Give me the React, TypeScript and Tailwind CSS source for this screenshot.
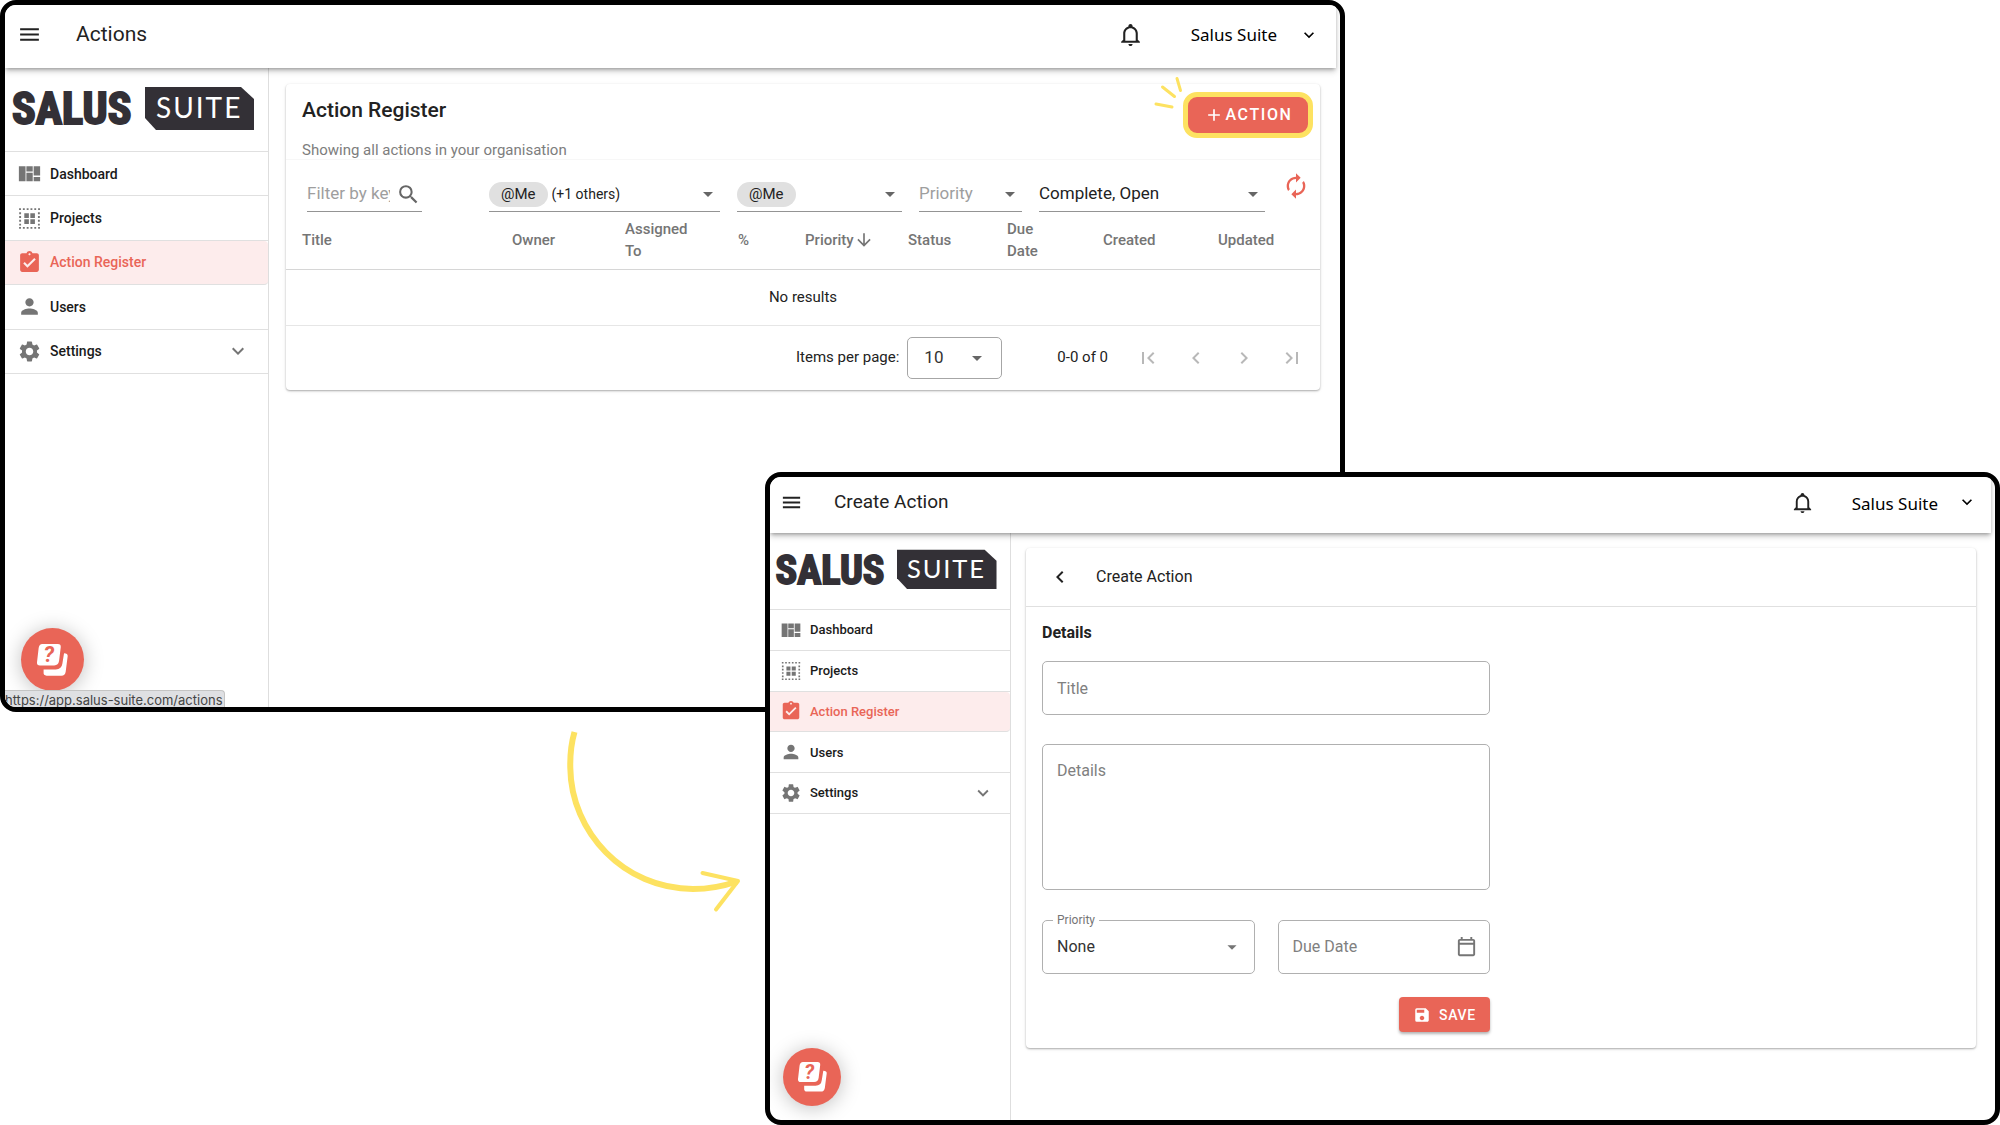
import clsx from "clsx";
import type { ReactNode } from "react";
import {
  MdAdd,
  MdArrowDownward,
  MdArrowDropDown,
  MdAssignmentTurnedIn,
  MdAutorenew,
  MdChevronLeft,
  MdChevronRight,
  MdFirstPage,
  MdKeyboardArrowDown,
  MdLastPage,
  MdMenu,
  MdPerson,
  MdSave,
  MdSearch,
  MdSettings,
} from "react-icons/md";

type IconProps = { className?: string };

const DashboardIcon = ({ className }: IconProps) => (
  <svg viewBox="0 0 24 24" fill="currentColor" className={className}>
    <path d="M1.800 5h6.400v14.500H1.800zM9 5h6.100v5H9zM9 11.200h6.100v8.300H9zM16 5h6.200v9H16zM16 15.400h6.200v4.100H16z" />
  </svg>
);

const ProjectsIcon = ({ className }: IconProps) => (
  <svg viewBox="0 0 24 24" fill="currentColor" className={className}>
    <path d="M7 7h4.400v4.400H7zM12.800 7h4.400v4.400h-4.400zM7 12.800h4.400v4.400H7zM12.800 12.800h4.400v4.400h-4.400z" />
    <path
      d="M2 3h20.200M2 21h20.200M3 6v13M21 6v13"
      fill="none"
      stroke="currentColor"
      strokeWidth="1.8"
      strokeDasharray="1.800 1.850"
    />
  </svg>
);

const BellIcon = ({ className }: IconProps) => (
  <svg viewBox="0 0 24 24" fill="currentColor" className={className}>
    <path d="M10 21h4c0 1.100-.9 2-2 2s-2-.9-2-2m11-2v1H3v-1l2-2v-6c0-3.100 2.030-5.830 5-6.710V4c0-1.100.9-2 2-2s2 .9 2 2v.29c2.970.88 5 3.610 5 6.710v6l2 2m-4-8c0-2.760-2.240-5-5-5s-5 2.240-5 5v7h10v-7z" />
  </svg>
);

const CalendarIcon = ({ className }: IconProps) => (
  <svg viewBox="0 0 24 24" fill="currentColor" className={className}>
    <path d="M19 3h-1V1h-2v2H8V1H6v2H5c-1.100 0-2 .9-2 2v14c0 1.100.9 2 2 2h14c1.100 0 2-.9 2-2V5c0-1.100-.9-2-2-2zm0 16H5V9h14v10zm0-12H5V5h14v2z" />
  </svg>
);

const Logo = ({ className }: IconProps) => (
  <svg
    viewBox="0 0 241 46"
    role="img"
    aria-label="Salus Suite"
    className={clsx("overflow-visible", className)}
  >
    <text
      x="-1"
      y="39"
      fontSize="44"
      fontWeight="700"
      fill="#333036"
      stroke="#333036"
      strokeWidth="2"
      fontFamily="'Liberation Sans Narrow', 'Roboto Condensed', sans-serif"
    >
      SALUS
    </text>
    <path d="M132 2h96l13 12v31H143l-11-12z" fill="#333036" />
    <text x="143" y="33" fontSize="28" letterSpacing="2" fill="#fff" fontFamily="Lato, sans-serif">
      SUITE
    </text>
  </svg>
);

const HelpButton = ({ compact }: { compact?: boolean }) => (
  <button
    type="button"
    aria-label="Help"
    className={clsx(
      "absolute flex items-center justify-center rounded-full bg-[#e96557] shadow-[0_2px_20px_rgba(0,0,0,0.25)]",
      compact ? "bottom-3.5 left-[13px] size-[58px]" : "left-4 bottom-4 size-[63px]"
    )}
  >
    <svg viewBox="0 0 94 96" className={clsx("overflow-visible", compact ? "w-[29px]" : "w-[31px]")}>
      <path
        fill="#fff"
        d="M16 0h47q10 0 9 10l-5 41q-2 14-15 14H9q-10 0-9-10l5-43Q7 0 16 0zM82 28q12 0 11 9l-6 47q-2 12-13 12H29q-10 0-9-10v-9h37q18-1 20-18z"
      />
      <text
        x="36"
        y="56"
        textAnchor="middle"
        fontSize="66"
        fontWeight="700"
        fontStyle="italic"
        fill="#e96557"
        fontFamily="Roboto, sans-serif"
      >
        ?
      </text>
    </svg>
  </button>
);

const navigation = [
  { name: "Dashboard", icon: DashboardIcon },
  { name: "Projects", icon: ProjectsIcon },
  { name: "Action Register", icon: MdAssignmentTurnedIn, active: true },
  { name: "Users", icon: MdPerson },
  { name: "Settings", icon: MdSettings, expandable: true },
];

const Sidebar = ({ compact }: { compact?: boolean }) => (
  <aside
    className={clsx(
      "shrink-0 border-r border-[#dedede]",
      compact ? "w-[241px]" : "w-[264px]"
    )}
  >
    <div
      className={clsx(
        "flex border-b border-[#e0e0e0]",
        compact ? "h-[77px] pl-1.5 pt-[15px]" : "h-[84px] pl-2 pt-[17px]"
      )}
    >
      <Logo className={compact ? "h-[42px] w-[221px]" : "h-[46px] w-[241px]"} />
    </div>
    <nav
      className={clsx(
        "grid auto-rows-fr font-medium",
        compact ? "h-[204px] text-[13px]" : "h-[222px] text-sm"
      )}
    >
      {navigation.map(({ name, icon: Icon, active, expandable }) => (
        <a
          href="#"
          key={name}
          className={clsx(
            "flex items-center gap-2 border-b border-[#e0e0e0]",
            compact ? "pl-2.5 pr-4" : "pl-3 pr-[18px]",
            active ? "rounded-r bg-[#fdecec] text-[#e96557]" : "text-[#1a1a1a]"
          )}
        >
          <Icon
            className={clsx(
              compact ? "size-[22px]" : "size-[25px]",
              !active && "text-[#757575]"
            )}
          />
          {name}
          {expandable && (
            <MdKeyboardArrowDown
              className={clsx(
                "ml-auto text-[#757575]",
                compact ? "size-[22px]" : "size-6"
              )}
            />
          )}
        </a>
      ))}
    </nav>
  </aside>
);

type WindowProps = {
  title: string;
  compact?: boolean;
  className?: string;
  overlay?: ReactNode;
  children: ReactNode;
};

const AppWindow = ({ title, compact, className, overlay, children }: WindowProps) => (
  <section
    className={clsx(
      "relative flex flex-col overflow-hidden rounded-2xl border-[5px] border-black bg-white pr-1",
      className
    )}
  >
    <header
      className={clsx(
        "z-10 flex items-center bg-white text-[#222] shadow-[0_2px_4px_-1px_rgba(0,0,0,0.35),0_4px_6px_rgba(0,0,0,0.14)]",
        compact ? "h-14 pb-1.5 pl-2.5 pr-3.5" : "h-[63px] pb-1 pl-3 pr-[17px]"
      )}
    >
      <button type="button" aria-label="Menu">
        <MdMenu className={compact ? "size-[23px]" : "size-[25px]"} />
      </button>
      <h1 className={compact ? "ml-[31px] text-[19px]" : "ml-[34px] text-[21px]"}>{title}</h1>
      <button type="button" aria-label="Notifications" className="ml-auto">
        <BellIcon className={compact ? "size-[23px]" : "size-[25px]"} />
      </button>
      <button
        type="button"
        className={clsx(
          "flex items-center font-['Noto_Sans',sans-serif] text-[17px] text-black",
          compact ? "ml-[38px] gap-[19px]" : "ml-12 gap-[22px]"
        )}
      >
        <span className={clsx(compact && "pt-1")}>Salus Suite</span>
        <MdKeyboardArrowDown className="size-5" />
      </button>
    </header>
    <div className="flex flex-1">
      <Sidebar compact={compact} />
      <main className={clsx("min-w-0 flex-1", compact ? "p-[15px]" : "py-4 pl-[17px] pr-4")}>
        {children}
      </main>
    </div>
    <HelpButton compact={compact} />
    {overlay}
  </section>
);

const Card = ({ children }: { children: ReactNode }) => (
  <div className="rounded bg-white shadow-[0_1px_2px_rgba(0,0,0,0.3),0_1px_5px_rgba(0,0,0,0.06)]">
    {children}
  </div>
);

type FilterProps = {
  label: string;
  chip?: string;
  value?: string;
  className?: string;
};

const FilterSelect = ({ label, chip, value, className }: FilterProps) => (
  <div className="relative flex h-[35px] items-center border-b border-[#949494]">
    {chip && (
      <span className="mr-1 rounded-full bg-[#e0e0e0] px-3 text-[15px] leading-[25px] text-[#222]">
        {chip}
      </span>
    )}
    <select
      aria-label={label}
      className={clsx("min-w-0 flex-1 appearance-none bg-transparent outline-none", className)}
    >
      <option>{value}</option>
    </select>
    <MdArrowDropDown className="pointer-events-none absolute right-0 size-6 text-[#666]" />
  </div>
);

const columns = [
  { name: "Title", width: "w-[210px]" },
  { name: "Owner", width: "w-[113px]" },
  { name: <>Assigned<br />To</>, width: "w-[113px]" },
  { name: "%", width: "w-[67px]" },
  { name: "Priority", width: "w-[103px]", sorted: true },
  { name: "Status", width: "w-[99px]" },
  { name: <>Due<br />Date</>, width: "w-[96px]" },
  { name: "Created", width: "w-[115px]" },
  { name: "Updated", width: "w-[118px]" },
];

const pager = [
  { label: "First page", icon: MdFirstPage },
  { label: "Previous page", icon: MdChevronLeft },
  { label: "Next page", icon: MdChevronRight },
  { label: "Last page", icon: MdLastPage },
];

const ActionRegister = () => (
  <Card>
    <div className="flex h-[76px] justify-between border-b border-[#f7f7f7] pl-4 pr-[7px]">
      <div className="pt-3">
        <h2 className="text-[21px] font-medium leading-7 text-[#222]">Action Register</h2>
        <p className="mt-3.5 text-[15px] leading-6 text-[#7d7d7d]">
          Showing all actions in your organisation
        </p>
      </div>
      <div className="relative pt-2">
        <svg
          viewBox="0 0 30 34"
          fill="none"
          stroke="#fde261"
          strokeWidth="3"
          strokeLinecap="round"
          className="absolute -top-2 right-full w-[30px]"
        >
          <path d="M24 2.500l3.500 12M9.500 11l12 9.500M3 28l16 3" />
        </svg>
        <button
          type="button"
          className="flex h-[46px] w-[130px] items-center justify-center gap-0.5 rounded-[14px] border-[5px] border-[#fde261] bg-[#e96557] font-medium tracking-widest text-white"
        >
          <MdAdd className="size-5" />
          ACTION
        </button>
      </div>
    </div>

    <div className="grid grid-cols-[165fr_231fr_165fr_103fr_226fr_38px] items-end gap-x-[17px] pl-[21px] pt-3">
      <label className="flex h-[35px] w-[115px] items-center border-b border-[#949494]">
        <input
          type="text"
          aria-label="Filter by keyword"
          placeholder="Filter by keyword"
          className="w-[83px] text-[17px] outline-none placeholder:text-[#9e9e9e]"
        />
        <MdSearch className="ml-1.5 size-[25px] shrink-0 text-[#666]" />
      </label>
      <FilterSelect label="Owner" chip="@Me" value="(+1 others)" className="text-sm text-[#222]" />
      <FilterSelect label="Assigned to" chip="@Me" className="text-sm" />
      <FilterSelect label="Priority" value="Priority" className="text-[17px] text-[#9e9e9e]" />
      <FilterSelect label="Status" value="Complete, Open" className="text-[17px] text-[#222]" />
      <button type="button" aria-label="Refresh" className="mb-3 text-[#e96557]">
        <MdAutorenew className="size-7" />
      </button>
    </div>

    <table className="w-full table-fixed text-left text-[15px]">
      <thead>
        <tr className="h-[57px] border-b border-[#d6d6d6] leading-[22px] text-[#757575]">
          {columns.map(({ name, width, sorted }, i) => (
            <th key={i} className={clsx("pl-4 font-medium", width)}>
              <span className="flex items-center">
                <span>{name}</span>
                {sorted && <MdArrowDownward className="size-5" />}
              </span>
            </th>
          ))}
        </tr>
      </thead>
      <tbody>
        <tr className="h-14 border-b border-[#e6e6e6]">
          <td colSpan={9} className="text-center text-[#222]">
            No results
          </td>
        </tr>
      </tbody>
    </table>

    <div className="flex h-16 items-center justify-end pr-1 text-[15px] text-[#222]">
      <label htmlFor="per-page">Items per page:</label>
      <div className="relative ml-2 flex items-center">
        <select
          id="per-page"
          className="h-[42px] w-[95px] appearance-none rounded-[5px] border border-[#a6a6a6] pl-4 text-[17px] text-[#333]"
        >
          <option>10</option>
        </select>
        <MdArrowDropDown className="pointer-events-none absolute right-[13px] size-6 text-[#666]" />
      </div>
      <span className="ml-[55px] mr-4">0-0 of 0</span>
      {pager.map(({ label, icon: Icon }) => (
        <button
          type="button"
          key={label}
          aria-label={label}
          disabled
          className="flex w-12 justify-center text-[#b8b8b8]"
        >
          <Icon className="size-6" />
        </button>
      ))}
    </div>
  </Card>
);

const CreateAction = () => (
  <Card>
    <div className="flex h-[59px] items-center border-b border-[#e0e0e0] pl-[22px] text-[#222]">
      <button type="button" aria-label="Back">
        <MdChevronLeft className="size-6" />
      </button>
      <h2 className="ml-6">Create Action</h2>
    </div>
    <form className="w-full max-w-[480px] px-4 pb-4 pt-3.5 text-[#333]">
      <h3 className="font-bold leading-6 text-[#222]">Details</h3>
      <input
        type="text"
        aria-label="Title"
        placeholder="Title"
        className="mt-4 block h-[54px] w-full rounded-[5px] border border-[#b0b0b0] px-3.5 placeholder:text-[#808080]"
      />
      <textarea
        aria-label="Details"
        placeholder="Details"
        className="mt-[29px] block h-[146px] w-full resize-none rounded-[5px] border border-[#b0b0b0] px-3.5 py-3.5 placeholder:text-[#808080]"
      />
      <div className="mt-[30px] grid grid-cols-2 gap-[23px]">
        <div className="relative flex items-center">
          <label
            htmlFor="priority"
            className="absolute -top-2 left-[11px] bg-white px-1 text-xs text-[#757575]"
          >
            Priority
          </label>
          <select
            id="priority"
            className="h-[54px] w-full appearance-none rounded-[5px] border border-[#b0b0b0] px-3.5"
          >
            <option>None</option>
          </select>
          <MdArrowDropDown className="pointer-events-none absolute right-3 size-[22px] text-[#757575]" />
        </div>
        <label className="flex h-[54px] items-center rounded-[5px] border border-[#b0b0b0] pl-3.5 pr-[11px]">
          <input
            type="text"
            aria-label="Due Date"
            placeholder="Due Date"
            className="min-w-0 flex-1 outline-none placeholder:text-[#808080]"
          />
          <CalendarIcon className="size-[23px] text-[#757575]" />
        </label>
      </div>
      <button
        type="submit"
        className="ml-auto mt-[23px] flex h-[35px] w-[91px] items-center justify-center gap-2 rounded bg-[#e96557] text-sm font-medium tracking-wider text-white shadow-[0_2px_3px_rgba(0,0,0,0.3)]"
      >
        <MdSave className="size-[18px]" />
        SAVE
      </button>
    </form>
  </Card>
);

const App = () => {
  return (
    <div className="grid min-h-screen grid-cols-[765fr_580fr_655fr] grid-rows-[472fr_240fr_413fr] bg-white font-[Roboto,sans-serif]">
      <AppWindow
        title="Actions"
        className="col-span-2 col-start-1 row-span-2 row-start-1"
        overlay={
          <div className="absolute bottom-0 left-0 rounded-tr border-r border-t border-[#c4c4c4] bg-[#dfe0e3] pr-px pt-[3px] font-[Inter,sans-serif] text-[13px] leading-[13px] text-[#444]">
            https://app.salus-suite.com/actions
          </div>
        }
      >
        <ActionRegister />
      </AppWindow>

      <AppWindow
        title="Create Action"
        compact
        className="col-span-2 col-start-2 row-span-2 row-start-2"
      >
        <CreateAction />
      </AppWindow>

      <svg
        viewBox="0 0 225 213"
        fill="none"
        stroke="#fde261"
        className="col-start-1 row-start-3 w-[225px] justify-self-end"
      >
        <path
          d="M34.500 20C31 32 30 44 30.300 56 31 120 84 177 153 177c16 0 31-3 44-7.500"
          strokeWidth="6"
        />
        <path
          d="M162.500 161l35.500 8-22 28.500"
          strokeWidth="4"
          strokeLinecap="round"
          strokeLinejoin="round"
        />
      </svg>
    </div>
  );
};

export default App;
